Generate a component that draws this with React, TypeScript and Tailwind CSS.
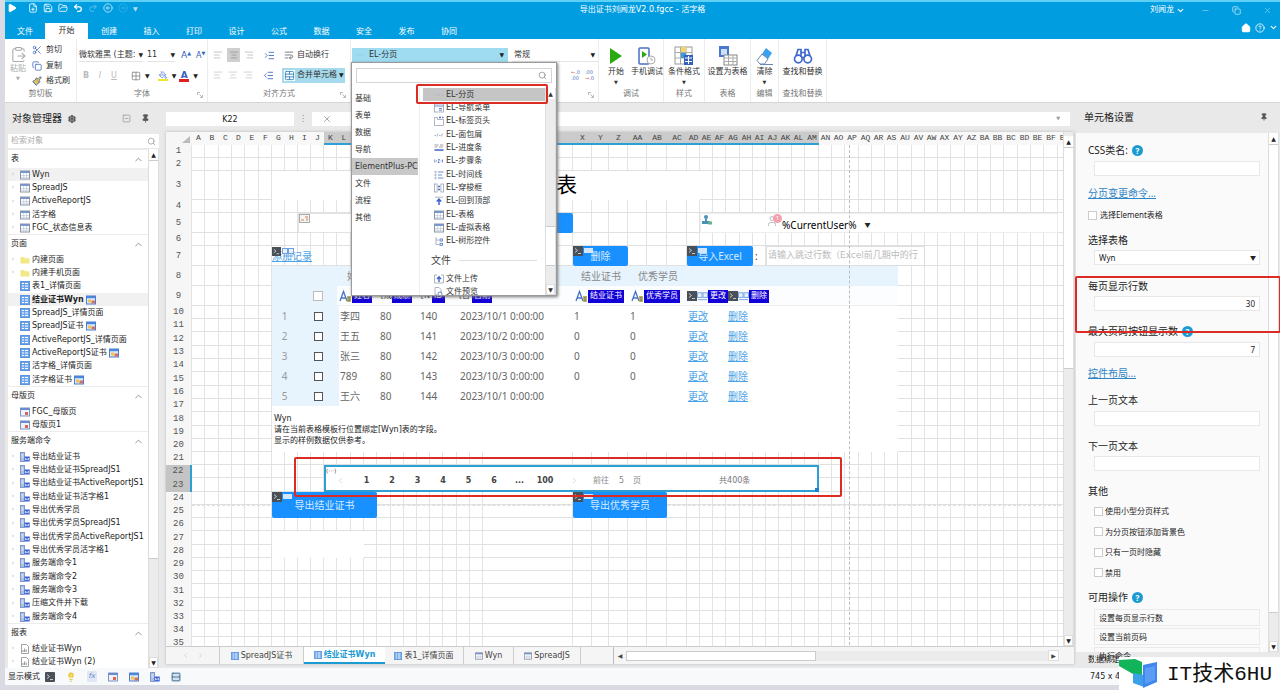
import React from 'react';
import {
  Play, FilePlus, Save, FolderOpen, Undo2, Redo2, CircleArrowLeft, CircleArrowRight, ChevronDown, ChevronUp,
  Minus, Copy, X, House, CircleHelp, Scissors, ClipboardPaste, Paintbrush, Grid2x2, PaintBucket,
  AlignLeft, AlignCenter, AlignRight, IndentIncrease, IndentDecrease, WrapText, TableCellsMerge, Search, Binoculars,
  Eraser, Settings, Pin, SquareMinus, ChevronLeft, ChevronRight, Lightbulb, Rows2, User,
} from 'lucide-react';

/* ---------- small drawings ---------- */

const TableIcon = ({ s = 10 }: { s?: number }) => (
  <svg width={s} height={s} viewBox="0 0 10 10" className="shrink-0">
    <rect x="0.5" y="1" width="9" height="8" fill="#fff" stroke="#8a95a8" />
    <rect x="0.5" y="1" width="9" height="2" fill="#7b96c8" />
    <path d="M1 5.5h8M1 7.3h8M3.7 3v6M6.5 3v6" stroke="#b9c2d2" strokeWidth="0.6" />
  </svg>
);
const PageIcon = ({ s = 10 }: { s?: number }) => (
  <svg width={s} height={s} viewBox="0 0 10 10" className="shrink-0">
    <rect x="0.5" y="0.5" width="9" height="9" fill="#6ca5ec" stroke="#5c93e0" />
    <path d="M2 2.5h2M5 2.5h3M2 5h2M5 5h3M2 7.5h2M5 7.5h3" stroke="#fff" strokeWidth="1.2" />
  </svg>
);
const FolderIcon = () => (
  <svg width="10" height="10" viewBox="0 0 10 10" className="shrink-0">
    <path d="M0.5 2h3.5l1 1.2h4.5v5.3h-9z" fill="#f3e887" />
  </svg>
);
const MasterIcon = () => (
  <svg width="10" height="10" viewBox="0 0 10 10" className="shrink-0">
    <rect x="0.5" y="1" width="9" height="8" fill="#eef2fa" stroke="#7d93c4" />
    <rect x="0.5" y="1" width="9" height="2" fill="#6a8ad2" />
    <rect x="5" y="5" width="3" height="3" fill="#e0644c" />
  </svg>
);
const CommandIcon = () => (
  <svg width="10" height="10" viewBox="0 0 10 10" className="shrink-0">
    <rect x="0.5" y="0.5" width="4" height="9" fill="#a9bfe6" stroke="#6b86be" strokeWidth="0.8" />
    <path d="M1.5 3h2M1.5 5h2" stroke="#fff" strokeWidth="0.8" />
    <rect x="4.5" y="4.5" width="5.2" height="5" fill="#3d63d6" />
    <path d="M5.5 8.2v-2l1.4 1.6 1.5-1.6v2" stroke="#fff" strokeWidth="0.7" fill="none" />
  </svg>
);
const ReportIcon = () => (
  <svg width="10" height="10" viewBox="0 0 10 10" className="shrink-0">
    <path d="M1.5 0.5h5l2 2v7h-7z" fill="#fff" stroke="#8b8b8b" strokeWidth="0.8" />
    <path d="M3 8V6M4.6 8V4.5M6.2 8V5.5" stroke="#777" strokeWidth="0.8" />
  </svg>
);
const BadgeIcon = () => (
  <svg width="10" height="10" viewBox="0 0 10 10" className="shrink-0">
    <rect x="0.5" y="1" width="9" height="8" fill="#dbe9fb" stroke="#4a7ed0" />
    <rect x="1" y="1" width="8" height="2.2" fill="#4a86dc" />
    <rect x="2" y="4.5" width="3" height="3" fill="#efc64a" />
    <rect x="5.5" y="5.5" width="3.5" height="3" fill="#d9705a" />
  </svg>
);
const ConsoleIcon = ({ s = 10 }: { s?: number }) => (
  <svg width={s} height={s} viewBox="0 0 10 10" className="shrink-0">
    <rect width="10" height="10" fill="#4a5058" />
    <path d="M2 2.5l2.5 2L2 6.5M5 7.5h3" stroke="#d5d9de" fill="none" strokeWidth="0.9" />
  </svg>
);
const MagicA = () => (
  <svg width="13" height="13" viewBox="0 0 13 13" className="shrink-0">
    <path d="M1 11L4.5 1.5 8 11M2.3 8h4.4" stroke="#4a72c8" fill="none" strokeWidth="1.3" />
    <rect x="8" y="6" width="4" height="6" fill="#b9b45e" />
    <path d="M9 7.5h2M9 9h2M9 10.5h2" stroke="#666" strokeWidth="0.6" />
  </svg>
);
const LinkBoxes = ({ s = 12 }: { s?: number }) => (
  <svg width={s} height="10" viewBox="0 0 12 10" className="shrink-0">
    <rect x="0.5" y="1.5" width="5" height="5" fill="#e8f1fd" stroke="#6f9fe0" />
    <rect x="6.5" y="1.5" width="5" height="5" fill="#e8f1fd" stroke="#6f9fe0" />
    <path d="M1 9h10" stroke="#6f9fe0" />
  </svg>
);
const Launcher = () => (
  <svg width="6" height="6" viewBox="0 0 6 6" className="absolute right-1 bottom-1">
    <path d="M0.5 3V0.5H3M2.5 2.5L5 5M5.5 3v2.5H3" stroke="#999" fill="none" strokeWidth="0.7" />
  </svg>
);
const Caret = () => <span className="text-[6px] leading-none text-[#222]">▼</span>;
const Help = () => (
  <span className="flex size-[11px] items-center justify-center rounded-full bg-[#1c9bd3] text-[8px] leading-none font-bold text-white">?</span>
);
const ElIcon = ({ kind }: { kind: string }) => {
  const p: Record<string, React.ReactNode> = {
    dots: <path d="M1.5 5h1M4.5 5h1M7.5 5h1" />,
    menu: <><rect x="0.5" y="1" width="9" height="8" /><path d="M0.5 3h9M5 5.5h3M5 7.2h3" stroke="#4a6fc4" /></>,
    tabs: <><path d="M0.5 3.5v6h9v-6M0.5 3.5v-2h3v2h6" /><path d="M5 1.5h2M8 1.5h1.5" stroke="#4a6fc4" strokeWidth="1.4" /></>,
    crumb: <path d="M0.5 5.5h1.6M3 6.5l1-3M5 5.5h1.6M7.5 6.5l1-3" />,
    progress: <><path d="M0.5 2h4M6 2h3.5M0.5 4h3M5 4h4" stroke="#888" /><path d="M0.5 7h9" stroke="#4a6fc4" strokeWidth="1.6" /></>,
    steps: <path d="M0.8 3.5v3M2 5h1M4 3.5h1.5L4 6.5h1.6M6.6 5h0.8M8.5 3.5v3" stroke="#4a6fc4" />,
    line: <><circle cx="1.5" cy="2" r="0.8" /><circle cx="1.5" cy="5" r="0.8" /><circle cx="1.5" cy="8" r="0.8" /><path d="M4 2h5.5M4 5h4M4 8h5.5" stroke="#4a6fc4" /></>,
    transfer: <><rect x="0.5" y="1" width="2.6" height="8" /><rect x="6.9" y="1" width="2.6" height="8" /><path d="M4 3.5h2M4 6.5h2" stroke="#4a6fc4" strokeWidth="1.3" /></>,
    top: <><path d="M1 1.2h8" /><path d="M5 9V3.5M2.8 5.5L5 3.2l2.2 2.3" stroke="#3c63d0" strokeWidth="1.5" /></>,
    tree: <><path d="M2 1v7.5h3M2 4h3" /><rect x="6" y="3" width="2.5" height="2" stroke="#4a6fc4" /><rect x="6" y="7.3" width="2.5" height="2" stroke="#4a6fc4" /></>,
    upload: <><path d="M3 1H0.5v8h9V1H7" /><path d="M5 8V3M3 5l2-2.2L7 5" stroke="#3c63d0" strokeWidth="1.4" /></>,
    view: <><path d="M1 0.5h4l2 2V6M1 0.5v7h2" /><circle cx="6" cy="7" r="2" stroke="#4a6fc4" /><path d="M7.5 8.5l2 1.2" stroke="#4a6fc4" /></>,
  };
  if (kind === 'table') return <TableIcon />;
  return <svg width="10" height="10" viewBox="0 0 10 10" fill="none" stroke="#9aa3b3" strokeWidth="0.8" className="shrink-0">{p[kind]}</svg>;
};

/* ---------- header ---------- */

const tabs = ['创建', '插入', '打印', '设计', '公式', '数据', '安全', '发布', '协同'];

function Header() {
  return (
    <header className="border-t-2 border-[#5fd0f5] bg-[#009de1] text-white">
      <div className="flex h-[18px] items-start justify-between pt-px">
        <div className="flex w-[480px] items-center gap-[5px] pl-[2px] [&_svg]:size-[10px]">
          <button aria-label="运行" className="mr-[6px]"><Play fill="white" /></button>
          <button aria-label="新建"><FilePlus /></button>
          <button aria-label="保存"><Save /></button>
          <button aria-label="打开"><FolderOpen /></button>
          <button aria-label="撤销"><Undo2 strokeWidth={3} /></button>
          <button aria-label="重做" className="opacity-40"><Redo2 /></button>
          <button aria-label="后退" className="opacity-80"><CircleArrowLeft /></button>
          <button aria-label="前进" className="opacity-20"><CircleArrowRight /></button>
          <span className="text-[6px] opacity-70">▼</span>
        </div>
        <h1 className="pt-px leading-[12px] whitespace-nowrap">导出证书刘闻龙V2.0.fgcc - 活字格</h1>
        <div className="flex w-[480px] items-center justify-end pt-px pr-2 leading-[12px]">
          <button className="flex items-center gap-[2px]">刘闻龙 <ChevronDown size={9} strokeWidth={3} /></button>
          <button aria-label="最小化" className="ml-4 opacity-50"><Minus size={9} /></button>
          <button aria-label="还原" className="ml-[22px] opacity-80"><Copy size={9} /></button>
          <button aria-label="关闭" className="ml-[22px] opacity-50"><X size={9} /></button>
        </div>
      </div>
      <nav className="flex h-[19px] items-center">
        <a href="#file" className="w-10 pt-1 text-center">文件</a>
        <a href="#home" className="flex h-4 w-[43px] items-center justify-center self-end bg-white text-[#333]">开始</a>
        {tabs.map((t) => <a key={t} href={'#' + t} className="w-[42px] pt-1 text-center even:w-[43px]">{t}</a>)}
        <span className="ml-auto flex items-center gap-1 pr-[2px] pb-1">
          <House size={10} fill="white" stroke="white" />
          <CircleHelp size={10} />
          <ChevronDown size={9} strokeWidth={3} />
        </span>
      </nav>
    </header>
  );
}

/* ---------- ribbon ---------- */

function Group({ label, className, launcher, children }: { label: string; className: string; launcher?: boolean; children: React.ReactNode }) {
  return (
    <section className={'relative flex h-full shrink-0 flex-col border-r border-[#ececec] ' + className}>
      <div className="flex h-[49px] items-stretch">{children}</div>
      <div className="text-center leading-[12px] text-[#777]">{label}</div>
      {launcher && <Launcher />}
    </section>
  );
}

function BigButton({ label, caret, className, children }: { label: string; caret?: boolean; className: string; children: React.ReactNode }) {
  return (
    <button className={'flex flex-col items-center pt-[7px] whitespace-nowrap ' + className}>
      <span className="flex h-5 items-center">{children}</span>
      <span className="leading-[11px]">{label}</span>
      {caret && <span className="mt-[2px] text-[5px] leading-[6px]">▼</span>}
    </button>
  );
}

const categories = ['基础', '表单', '数据', '导航', 'ElementPlus-PC', '文件', '流程', '其他'];
const cellTypes = [
  ['EL-分页', 'dots'], ['EL-导航菜单', 'menu'], ['EL-标签页头', 'tabs'], ['EL-面包屑', 'crumb'], ['EL-进度条', 'progress'],
  ['EL-步骤条', 'steps'], ['EL-时间线', 'line'], ['EL-穿梭框', 'transfer'], ['EL-回到顶部', 'top'], ['EL-表格', 'table'],
  ['EL-虚拟表格', 'table'], ['EL-树形控件', 'tree'],
];

function ScrollBar({ thumb, className = '' }: { thumb: string; className?: string }) {
  return (
    <div className={'flex w-[11px] shrink-0 flex-col border-x border-[#ddd] bg-[#ececec] ' + className}>
      <button aria-label="向上" className="flex h-[11px] items-center justify-center bg-white text-[6px] leading-none">▲</button>
      <div className="flex min-h-0 flex-1 flex-col"><div className={'border-y border-[#ccc] bg-white ' + thumb} /></div>
      <button aria-label="向下" className="flex h-[11px] items-center justify-center border border-[#ddd] bg-white text-[6px] leading-none">▼</button>
    </div>
  );
}

function CellTypeMenu() {
  return (
    <div className="absolute top-[14px] -left-px z-20 flex h-[234px] w-[206px] flex-col border border-[#9a9a9a] bg-white shadow-[1px_1px_3px_#777]">
      <label className="mx-1 mt-[5px] flex h-[15px] shrink-0 items-center border border-[#d5d5d5] px-1">
        <input aria-label="搜索单元格类型" className="min-w-0 flex-1 outline-none" />
        <Search size={9} className="text-[#888]" />
      </label>
      <div className="mt-[5px] flex min-h-0 flex-1">
        <ul className="w-[68px] shrink-0 border-r border-[#eee] pt-[2px]">
          {categories.map((c) => (
            <li key={c} className={'flex h-[17px] items-center pl-[3px] whitespace-nowrap ' + (c === 'ElementPlus-PC' ? 'w-[66px] bg-[#c8c8c8]' : '')}>{c}</li>
          ))}
        </ul>
        <div className="relative min-w-0 flex-1 pl-[3px]">
          <div className="h-full overflow-hidden">
            <ul className="[&>li:nth-child(3n)]:h-[14px]">
              {cellTypes.map(([name, kind], i) => (
                <li key={name} className={'flex h-[13px] items-center gap-[2px] pl-[11px] ' + (i === 0 ? 'bg-[#c5c5c5]' : '')}>
                  <ElIcon kind={kind} />{name}
                </li>
              ))}
            </ul>
            <div className="flex h-6 items-center gap-2 pl-2 text-[10px] text-[#444]">文件<hr className="mr-2 flex-1 border-[#ddd]" /></div>
            <ul>
              <li className="flex h-[13px] items-center gap-[2px] pl-[11px]"><ElIcon kind="upload" />文件上传</li>
              <li className="flex h-[13px] items-center gap-[2px] pl-[11px]"><ElIcon kind="view" />文件预览</li>
            </ul>
          </div>
          <div className="absolute -top-1 -right-[3px] -left-1 h-5 rounded-[2px] border-2 border-[#dc2b22]" />
        </div>
        <ScrollBar thumb="mt-auto mb-[18px] h-10" />
      </div>
    </div>
  );
}

function Ribbon() {
  return (
    <div className="flex h-[63px] shrink-0 bg-white text-[#333]">
      <Group label="剪切板" className="w-[72px]">
        <div className="flex w-[26px] flex-col items-center pt-[7px] text-[#aaa]">
          <ClipboardPaste size={17} strokeWidth={1.5} /><span className="leading-[12px]">粘贴</span><span className="text-[5px]">▼</span>
        </div>
        <div className="flex flex-col justify-between pt-[4px] pl-px [&>button]:flex [&>button]:h-[14px] [&>button]:items-center [&>button]:gap-[4px]">
          <button><Scissors size={10} className="text-[#4a6fc4]" />剪切</button>
          <button><Copy size={10} className="text-[#4a6fc4]" />复制</button>
          <button><Paintbrush size={10} className="text-[#3a62c0]" fill="#e9c34a" />格式刷</button>
        </div>
      </Group>
      <Group label="字体" className="w-[131px]" launcher>
        <div className="flex flex-1 flex-col pt-[9px] pl-[2px]">
          <div className="flex h-[15px] items-center">
            <button className="flex w-[64px] items-center justify-between overflow-hidden border-b border-[#e5e5e5] whitespace-nowrap"><span className="w-[58px] overflow-hidden text-left">微软雅黑 (主题:</span><Caret /></button>
            <button className="ml-1 flex w-[28px] items-center justify-between border-b border-[#e5e5e5]">11<Caret /></button>
            <button className="ml-[6px] text-[9px] text-[#3562b8]">A<sup className="text-[5px]">▲</sup></button>
            <button className="ml-[5px] text-[8px] text-[#3562b8]">A<sup className="text-[5px]">▼</sup></button>
          </div>
          <div className="mt-[6px] flex h-[14px] items-center">
            <button className="ml-[2px] w-[10px] font-bold text-[#bbb]">B</button>
            <button className="ml-1 w-[10px] text-[#bbb] italic">I</button>
            <button className="ml-1 w-[10px] text-[#bbb] underline">U</button>
            <button className="ml-3 flex items-center gap-1"><Grid2x2 size={10} className="text-[#888]" /><Caret /></button>
            <button className="ml-2 flex items-center gap-1"><PaintBucket size={10} className="border-b-2 border-[#f1e52c] text-[#4a6fc4]" /><Caret /></button>
            <button className="ml-[3px] flex items-center gap-1"><span className="w-[10px] border-b-[3px] border-[#e02020] text-[9px] leading-[8px] font-bold text-[#3562b8]">A</span><Caret /></button>
          </div>
        </div>
      </Group>
      <Group label="对齐方式" className="w-[143px]" launcher>
        <div className="flex flex-col gap-[6px] pt-[9px] pl-[5px]">
          <div className="flex h-[14px] items-center text-[#bbb]">
            <AlignLeft size={10} /><span className="mx-1 flex h-[14px] w-[13px] items-center justify-center bg-[#cfcfcf] text-[#999]"><AlignCenter size={10} /></span><AlignRight size={10} />
            <IndentIncrease size={11} className="ml-[10px] text-[#4a6fc4]" />
            <button className="ml-[9px] flex items-center gap-[3px] text-[#333]"><WrapText size={10} className="text-[#667]" />自动换行</button>
          </div>
          <div className="flex h-[14px] items-center text-[#ccc]">
            <AlignLeft size={10} /><AlignCenter size={10} className="mx-[5px]" /><AlignRight size={10} />
            <IndentDecrease size={11} className="ml-[10px] text-[#4a6fc4]" />
            <button className="ml-2 flex h-[15px] w-[63px] items-center gap-[2px] bg-[#a5dbec] pl-[2px] whitespace-nowrap text-[#333]"><TableCellsMerge size={11} className="shrink-0 bg-white text-[#3a86b8]" />合并单元格<Caret /></button>
          </div>
        </div>
      </Group>
      <Group label="" className="w-[248px]" launcher>
        <div className="flex pt-[9px] pl-px">
          <div className="relative h-[14px] w-[156px]">
            <button className="flex h-[14px] w-full items-center gap-1 bg-[#9fdcf2] pr-1 pl-[3px] text-left" aria-expanded="true"><ElIcon kind="dots" /><span className="flex-1">EL-分页</span><Caret /></button>
            <CellTypeMenu />
          </div>
          <div className="ml-1 w-[86px]">
            <button className="flex h-[14px] w-full items-center justify-between border-b border-[#e5e5e5] pr-[3px] pl-[2px]">常规<Caret /></button>
            <div className="mt-[7px] flex justify-end gap-[5px] pr-1 text-[5px] leading-[6px] text-[#4a6fc4]">
              <span><span className="text-[#d9704a]">←</span>.0<br />.00</span>
              <span>.00<br /><span className="text-[#d9704a]">→</span>.0</span>
            </div>
          </div>
        </div>
      </Group>
      <Group label="调试" className="w-[65px]">
        <BigButton label="开始" caret className="w-[34px]"><svg width="14" height="18" viewBox="0 0 14 18"><path d="M1 1l12 8L1 17z" fill="#2aa910" /></svg></BigButton>
        <BigButton label="手机调试" className="w-[28px]">
          <svg width="20" height="20" viewBox="0 0 20 20" fill="none"><rect x="2" y="2" width="10" height="16" rx="1" stroke="#4a6fc4" strokeWidth="1.5" /><path d="M5 5l5 3.5L5 12z" fill="#2aa910" /><circle cx="14" cy="14" r="4" fill="#fff" stroke="#aaa" /><path d="M14 11.5V14h2" stroke="#aaa" /></svg>
        </BigButton>
      </Group>
      <Group label="样式" className="w-[41px]">
        <BigButton label="条件格式" caret className="w-full">
          <svg width="20" height="20" viewBox="0 0 20 20"><rect x="1" y="1" width="17" height="17" fill="#fff" stroke="#999" /><path d="M1 6.5h17M1 12h17M6.5 1v17M12 1v17" stroke="#aaa" /><rect x="7" y="1" width="5" height="5" fill="#efd76a" /><rect x="7" y="7" width="5" height="5" fill="#3a9bd8" /><rect x="10" y="9" width="9" height="10" fill="#3562c0" /><path d="M11 12h7M11 15.5h7M14.5 10v8" stroke="#fff" /></svg>
        </BigButton>
      </Group>
      <Group label="表格" className="w-[46px]">
        <BigButton label="设置为表格" className="w-full">
          <svg width="20" height="20" viewBox="0 0 20 20"><rect x="1" y="0" width="10" height="11" fill="#4a78d0" /><rect x="3" y="3" width="6" height="6" fill="#cfe0fa" /><rect x="6" y="9" width="13" height="10" fill="#fff" stroke="#888" /><path d="M6 12h13M6 15.5h13M10.5 9v10M15 9v10" stroke="#aaa" /></svg>
        </BigButton>
      </Group>
      <Group label="编辑" className="w-[28px]">
        <BigButton label="清除" caret className="w-full">
          <svg width="20" height="20" viewBox="0 0 20 20"><path d="M11 2l6 5-4 6-6-5z" fill="#3ba0ee" /><path d="M7 8l6 5-3.5 5H5l-3-3.5z" fill="#fff" stroke="#6c86b4" /><path d="M5 18.5h13" stroke="#6c86b4" /></svg>
        </BigButton>
      </Group>
      <Group label="查找和替换" className="w-[48px]">
        <BigButton label="查找和替换" className="w-full">
          <svg width="20" height="18" viewBox="0 0 20 18" fill="none" stroke="#3f68d0" strokeWidth="1.7"><circle cx="5.3" cy="12" r="3.8" /><circle cx="14.7" cy="12" r="3.8" /><path d="M9 11q1-1 2 0M3 9L5 2.5h3V10M17 9l-2-6.5h-3V10M8 5.5h4" /></svg>
        </BigButton>
      </Group>
    </div>
  );
}

/* ---------- object tree ---------- */

type Item = { t: string; badge?: boolean; on?: boolean; icon?: React.ReactNode; arrow?: boolean };
const sections: { title: string; icon: React.ReactNode; arrow: boolean; items: Item[] }[] = [
  { title: '表', icon: <TableIcon />, arrow: true, items: [{ t: 'Wyn', on: true }, { t: 'SpreadJS' }, { t: 'ActiveReportJS' }, { t: '活字格' }, { t: 'FGC_状态信息表' }] },
  {
    title: '页面', icon: <PageIcon />, arrow: false, items: [
      { t: '内建页面', icon: <FolderIcon />, arrow: true }, { t: '内建手机页面', icon: <FolderIcon />, arrow: true }, { t: '表1_详情页面' },
      { t: '结业证书Wyn', badge: true, on: true }, { t: 'SpreadJS_详情页面' }, { t: 'SpreadJS证书', badge: true },
      { t: 'ActiveReportJS_详情页面' }, { t: 'ActiveReportJS证书', badge: true }, { t: '活字格_详情页面' }, { t: '活字格证书', badge: true }],
  },
  { title: '母版页', icon: <MasterIcon />, arrow: false, items: [{ t: 'FGC_母版页' }, { t: '母版页1' }] },
  {
    title: '服务端命令', icon: <CommandIcon />, arrow: true, items: [
      '导出结业证书', '导出结业证书SpreadJS1', '导出结业证书ActiveReportJS1', '导出结业证书活字格1', '导出优秀学员', '导出优秀学员SpreadJS1',
      '导出优秀学员ActiveReportJS1', '导出优秀学员活字格1', '服务端命令1', '服务端命令2', '服务端命令3', '压缩文件并下载', '服务端命令4'].map((t) => ({ t })),
  },
  { title: '报表', icon: <ReportIcon />, arrow: true, items: [{ t: '结业证书Wyn' }, { t: '结业证书Wyn (2)' }] },
];

function Sidebar() {
  return (
    <aside className="flex w-[156px] shrink-0 flex-col pr-[2px] pl-[3px]">
      <div className="flex h-[31px] shrink-0 items-center pl-1 text-[10px]">
        对象管理器<Settings size={8} strokeWidth={4} className="ml-[6px] text-[#555]" />
        <SquareMinus size={9} className="ml-auto text-[#999]" /><Pin size={9} fill="#555" className="mr-[9px] ml-[10px] text-[#555]" />
      </div>
      <label className="flex h-[14px] shrink-0 items-center bg-white px-[3px]">
        <input placeholder="检索对象" aria-label="检索对象" className="min-w-0 flex-1 outline-none placeholder:text-[#aaa]" /><Search size={9} className="text-[#999]" />
      </label>
      <div className="mt-px flex min-h-0 flex-1 bg-white">
        <div className="min-w-0 flex-1 overflow-hidden">
          {sections.map((s) => (
            <section key={s.title}>
              <h2 className="flex h-[19px] items-center justify-between border-t border-[#ececec] pr-1 pl-[3px]">{s.title}<ChevronUp size={11} strokeWidth={1.5} className="text-[#666]" /></h2>
              <ul className="[&>li:nth-child(3n)]:h-[14px]">
                {s.items.map((i) => (
                  <li key={i.t} className={'flex h-[13px] items-center gap-[2px] whitespace-nowrap ' + (i.on ? 'bg-[#f1f1f1] ' : '') + (i.on && i.badge ? 'font-bold' : '')}>
                    <span className="w-[10px] shrink-0 text-center text-[7px] text-[#bbb]">{(s.arrow || i.arrow) && '›'}</span>
                    {i.icon ?? s.icon}
                    {i.t}
                    {i.badge && <BadgeIcon />}
                  </li>
                ))}
              </ul>
            </section>
          ))}
        </div>
        <ScrollBar thumb="h-[399px]" />
      </div>
    </aside>
  );
}

/* ---------- sheet ---------- */

const columns: [string, number][] = [
  ['A', 13], ['B', 14], ['C', 13], ['D', 13], ['E', 14], ['F', 13], ['G', 13], ['H', 13], ['I', 13], ['J', 13], ['K', 13], ['L', 14],
  ['M', 13], ['N', 13], ['O', 14], ['P', 13], ['Q', 13], ['R', 13], ['S', 13], ['T', 14], ['U', 13], ['V', 13], ['W', 90], ['X', 19],
  ['Y', 17], ['Z', 19], ['AA', 19], ['AB', 20], ['AC', 20], ['AD', 13], ['AE', 13], ['AF', 13], ['AG', 14], ['AH', 13], ['AI', 13],
  ['AJ', 13], ['AK', 13], ['AL', 13], ['AM', 14], ['AN', 13], ['AO', 13], ['AP', 14], ['AQ', 13], ['AR', 13], ['AS', 13], ['AU', 14],
  ['AV', 13], ['AW', 13], ['AX', 13], ['AY', 14], ['AZ', 13], ['BA', 13], ['BB', 13], ['BC', 14], ['BD', 13], ['BE', 13], ['BF', 14], ['BG', 13],
];
const rowHeights = [13, 13, 29, 13, 20, 13, 20, 20, 20, 13, 13, 14, 13, 13, 14, 13, 13, 14, 13, 13, 13, 13, 14, 13, 13, 13, 14, 13, 13, 13, 14, 13, 13, 13, 13];
const names = columns.map((c) => c[0]);
const sheetTemplate = {
  gridTemplateColumns: '26px ' + columns.map((c) => c[1] + 'px').join(' '),
  gridTemplateRows: '13px ' + rowHeights.map((h) => h + 'px').join(' '),
};

/** Grid placement of a cell range such as "G24:N25". */
function at(range: string): React.CSSProperties {
  const [a, b = a] = range.split(':');
  const parse = (r: string) => {
    const m = /^([A-Z]+)(\d+)$/.exec(r)!;
    return { c: names.indexOf(m[1]) + 2, r: Number(m[2]) + 1 };
  };
  const from = parse(a);
  const to = parse(b);
  return { gridColumn: `${from.c} / ${to.c + 1}`, gridRow: `${from.r} / ${to.r + 1}` };
}

function SheetButton({ range, children }: { range: string; children: React.ReactNode }) {
  return (
    <button style={at(range)} className="relative rounded-[2px] bg-[#1890ff] text-center text-[10px] whitespace-nowrap text-[#d9ecff]">
      <span className="absolute top-0 left-0 flex"><ConsoleIcon /><span className="mt-[2px] ml-px h-[5px] w-[9px] bg-[#d4e6fb]" /></span>
      {children}
    </button>
  );
}

const Tag = ({ children }: { children: React.ReactNode }) => <span className="flex h-[13px] items-center bg-[#1200d8] px-[2px] whitespace-nowrap text-white">{children}</span>;

const records = [
  ['李四', '80', '140', '2023/10/1 0:00:00', '1', '1'],
  ['王五', '80', '141', '2023/10/2 0:00:00', '0', '0'],
  ['张三', '80', '142', '2023/10/3 0:00:00', '0', '0'],
  ['789', '80', '143', '2023/10/3 0:00:00', '0', '0'],
  ['王六', '80', '144', '2023/10/1 0:00:00', '', ''],
];

function Records() {
  return (
    <div style={at('G10:AS20')} className="bg-white">
      <table className="w-full table-fixed border-collapse text-left text-[10px] text-[#666]">
        <colgroup>
          <col className="w-[25px]" /><col className="w-[42px]" /><col className="w-10" /><col className="w-10" /><col className="w-10" />
          <col className="w-[114px]" /><col className="w-14" /><col className="w-[58px]" /><col className="w-10" /><col />
        </colgroup>
        <tbody>
          {records.map((r, i) => (
            <tr key={i} className="h-5 leading-[20px]">
              <td className="bg-[#e8f4fd] p-0 text-center text-[#999]">{i + 1}</td>
              <td className="bg-[#e8f4fd] p-0"><input type="checkbox" aria-label={r[0]} className="ml-[17px] block size-[9px] appearance-none border border-[#555] bg-white" /></td>
              {r.map((v, k) => <td key={k} className="p-0 pl-px whitespace-nowrap">{v}</td>)}
              <td className="p-0 pl-px text-[#4aa3e8] underline"><a href="#edit">更改</a></td>
              <td className="p-0 pl-px text-[#4aa3e8] underline"><a href="#delete">删除</a></td>
            </tr>
          ))}
        </tbody>
      </table>
      <p className="pt-[7px] pl-[2px] leading-[11px] text-[#222]">Wyn<br />请在当前表格模板行位置绑定[Wyn]表的字段。<br />显示的样例数据仅供参考。</p>
    </div>
  );
}

function Pager() {
  return (
    <nav style={at('K22:AM23')} className="relative border-2 border-[#2c9fd4] bg-white">
      <span className="absolute top-0 left-0 text-[6px] leading-[8px] text-[#555]">(···)</span>
      <div className="flex h-full items-center pt-1 text-[#444]">
        <button aria-label="上一页" className="flex w-[28px] justify-center text-[#ccc]"><ChevronLeft size={9} /></button>
        {['1', '2', '3', '4', '5', '6', '...', '100'].map((n) => <button key={n} className="w-[25px] font-bold odd:w-[26px]">{n}</button>)}
        <button aria-label="下一页" className="ml-1 flex w-[25px] justify-center text-[#ccc]"><ChevronRight size={9} /></button>
        <span className="ml-[6px] text-[#888]">前往</span><span className="ml-[10px] text-[#888]">5</span><span className="ml-[9px] text-[#888]">页</span>
        <span className="ml-[78px] text-[#777]">共400条</span>
      </div>
      <span className="absolute -right-[2px] -bottom-[2px] size-[4px] bg-[#1f7fd0]" />
      <div className="absolute -top-[10px] -right-[25px] -bottom-[7px] -left-[32px] z-10 rounded-[2px] border-2 border-[#dc2b22]" />
    </nav>
  );
}

function Sheet() {
  return (
    <div className="min-w-0 flex-1 overflow-hidden bg-white">
      <div className="grid" style={sheetTemplate}>
        <div style={{ gridColumn: 1, gridRow: 1 }} className="flex items-end justify-end bg-[#f6f6f6] pr-[2px] pb-[2px]"><svg width="8" height="7" viewBox="0 0 8 7"><path d="M8 0v7H0z" fill="#bbb" /></svg></div>
        {columns.map(([n], i) => {
          const active = i >= 10 && i <= 38;
          return (
            <React.Fragment key={n}>
              <div style={{ gridColumn: i + 2, gridRow: 1 }} className={'overflow-hidden text-center font-[Liberation_Mono,monospace] text-[8px] leading-[12px] text-[#444] ' + (active ? 'border-b-2 border-[#2c9fd4] bg-[#cbcbcb]' : 'bg-[#f8f8f8]')}>{n}</div>
              <div style={{ gridColumn: i + 2, gridRow: '2 / -1' }} className="border-r border-[#e3e3e3]" />
            </React.Fragment>
          );
        })}
        {rowHeights.map((_, i) => {
          const active = i === 21 || i === 22;
          return (
            <React.Fragment key={i}>
              <div style={{ gridColumn: 1, gridRow: i + 2 }} className={'flex items-center justify-center font-[Liberation_Mono,monospace] text-[9px] leading-none text-[#555] ' + (active ? 'border-r-2 border-[#2c9fd4] bg-[#c4c4c4]' : 'border-r border-[#e3e3e3] bg-[#f6f6f6]')}>{i + 1}</div>
              <div style={{ gridColumn: '2 / -1', gridRow: i + 2 }} className="border-b border-[#e0e0e0]" />
            </React.Fragment>
          );
        })}

        <div style={at('G3:AD3')} className="bg-white" />
        <div style={at('W3:X3')} className="flex items-center justify-end pr-[15px] text-[21px] leading-none text-black">表</div>

        <div style={at('I5:V5')} className="border border-[#e3e3e3] bg-white"><svg width="11" height="9" viewBox="0 0 11 9"><rect x="0.5" y="0.5" width="10" height="8" fill="#f4f4f4" stroke="#aaa" /><path d="M2 6h3M6 3h1M8 2v5" stroke="#d9805a" /></svg></div>
        <div style={at('W5')} className="rounded-[2px] bg-[#1890ff]" />
        <div style={at('AE5:BF5')} className="border border-[#eee] bg-white">
          <svg width="12" height="12" viewBox="0 0 12 12"><circle cx="5" cy="3" r="2" fill="#4a90b8" /><path d="M4 5h2v2h3v3H1V7h3z" fill="#4a90b8" /><rect x="7" y="7.5" width="4" height="3" fill="#5fb58a" /></svg>
        </div>
        <div style={at('AJ5:AS5')} className="flex items-center text-[10px] text-black">
          <span className="relative flex w-4 shrink-0 self-start"><User size={12} className="mt-[2px] text-[#bbb]" /><span className="absolute top-px right-0 size-[9px] rounded-full bg-[#f3a0ae] text-center text-[6px] leading-[9px] text-white">1</span></span>
          <span className="pt-1">%CurrentUser%</span><span className="ml-2"><Caret /></span>
        </div>

        <div style={at('G7:J7')} className="relative text-[10px] leading-[20px] whitespace-nowrap text-[#4aa3e8]">
          <a href="#add" className="underline">添加记录</a>
          <span className="absolute top-px left-0 flex gap-px"><ConsoleIcon s={9} /><LinkBoxes /></span>
        </div>
        <SheetButton range="X7:Z7">删除</SheetButton>
        <SheetButton range="AD7:AH7">导入Excel</SheetButton>
        <div style={at('AI7')} className="pl-[2px] text-[10px] leading-[20px] text-[#333]">:</div>
        <input style={at('AJ7:AV7')} aria-label="跳过行数" placeholder="请输入跳过行数（Excel前几期中的行" className="w-full min-w-0 border border-[#ddd] bg-white/80 pl-px text-[9px] outline-none placeholder:text-[#bbb]" />

        <div style={at('G8:AS8')} className="bg-[#e8f4fd]" />
        <div style={at('K9:AS9')} className="border-b border-[#eee] bg-[#fbfdff]" />
        <div style={at('G9:K9')} className="flex items-center bg-[#e8f4fd] pl-[41px]"><input type="checkbox" aria-label="全选" className="size-[10px] appearance-none border border-[#bbb] bg-white" /></div>
        <div style={at('L8')} className="pl-[10px] text-[10px] leading-[20px] text-[#888]">姓</div>
        <div style={at('X8:Z8')} className="pl-2 text-[10px] leading-[20px] whitespace-nowrap text-[#888]">结业证书</div>
        <div style={at('AA8:AC8')} className="pl-[10px] text-[10px] leading-[20px] whitespace-nowrap text-[#888]">优秀学员</div>
        <div style={at('L9:W9')} className="flex items-center pl-[2px]">
          <span className="flex w-10 items-center"><MagicA /><Tag>姓名</Tag></span>
          <span className="flex w-10 items-center"><span className="w-[13px]">{'{成'}</span><Tag>成绩</Tag></span>
          <span className="flex w-10 items-center"><span className="w-[13px]">{'{N'}</span><Tag>ID</Tag></span>
          <span className="flex items-center"><span className="w-[13px]">[日</span><Tag>日期</Tag></span>
        </div>
        <div style={at('X9:Z9')} className="flex items-center pl-[2px]"><MagicA /><Tag>结业证书</Tag></div>
        <div style={at('AA9:AC9')} className="flex items-center pl-[3px]"><MagicA /><Tag>优秀学员</Tag></div>
        <div style={at('AD9:AI9')} className="flex items-center"><ConsoleIcon /><LinkBoxes s={11} /><Tag>更改</Tag><span className="w-px" /><ConsoleIcon /><LinkBoxes s={11} /><Tag>删除</Tag></div>

        <Records />
        <div style={at('A25:BG25')} className="border-t border-dashed border-[#ddd]" />
        <SheetButton range="G24:N25">导出结业证书</SheetButton>
        <SheetButton range="X24:AB25">导出优秀学员</SheetButton>
        <Pager />
        <div style={at('G27:M28')} className="bg-white" />
        <div style={at('AP1:AP35')} className="ml-1 border-l border-dashed border-[#bbb]" />
      </div>
    </div>
  );
}

const sheetTabs: [string, React.ReactNode, string][] = [
  ['SpreadJS证书', <PageIcon s={8} />, 'w-[84px]'], ['结业证书Wyn', <PageIcon s={8} />, 'w-[81px]'], ['表1_详情页面', <PageIcon s={8} />, 'w-[79px]'],
  ['Wyn', <TableIcon s={8} />, 'w-[50px]'], ['SpreadJS', <TableIcon s={8} />, 'w-[67px]'],
];

function Workbook() {
  return (
    <main className="flex min-w-0 flex-1 flex-col pt-[9px] pb-1 pl-[5px]">
      <div className="flex h-[14px] shrink-0 items-center">
        <input aria-label="名称框" defaultValue="K22" className="h-full w-[128px] bg-white text-center outline-none" />
        <span className="w-[18px] text-center text-[#888]">⋮</span>
        <div className="mr-[6px] flex h-full flex-1 items-center bg-white px-[10px] text-[#999]"><X size={10} /><input aria-label="编辑栏" className="ml-4 h-full min-w-0 flex-1 outline-none" /><span className="text-[5px]">▼</span></div>
      </div>
      <div className="mt-[6px] mr-[2px] flex min-h-0 flex-1 flex-col shadow-[0_0_3px_#bbb]">
        <div className="flex min-h-0 flex-1"><Sheet /><ScrollBar thumb="h-[222px]" className="pt-1" /></div>
        <div className="flex h-[18px] shrink-0 items-stretch border-t border-[#ccc] bg-[#f5f5f5] text-[#444]">
          <span className="flex w-[54px] items-center justify-center gap-2 border-r border-[#ccc] text-[#bbb]"><ChevronLeft size={7} /><ChevronRight size={7} /></span>
          {sheetTabs.map(([t, icon, w], i) => (
            <button key={t} className={'flex items-center justify-center gap-[2px] whitespace-nowrap ' + w + (i === 1 ? ' border-b-2 border-[#1c9bd3] bg-white font-bold text-[#1c9bd3]' : ' border-r border-[#ccc]')}>{icon}{t}</button>
          ))}
          <div className="ml-8 flex flex-1 items-center border-l border-[#bbb] py-[3px] pr-[15px]">
            <button aria-label="向左" className="w-3 text-[6px]">◀</button>
            <div className="h-[10px] flex-1 bg-[#ececec]"><div className="h-full w-[45%] border border-[#ccc] bg-white" /></div>
            <button aria-label="向右" className="h-[11px] w-[11px] border border-[#ddd] bg-white text-[6px] leading-none">▶</button>
          </div>
        </div>
      </div>
    </main>
  );
}

/* ---------- property panel ---------- */

const field = 'ml-[6px] block h-[15px] w-[166px] border border-[#e8e8e8] bg-white px-1 outline-none';
const box = 'size-[9px] appearance-none border border-[#ccc] bg-white';

function Properties() {
  return (
    <aside className="flex w-[204px] shrink-0 flex-col">
      <h2 className="flex h-[30px] shrink-0 items-center justify-between pr-3 pb-[2px] pl-2 text-[10px]">单元格设置<Pin size={8} fill="#555" className="text-[#555]" /></h2>
      <div className="flex min-h-0 flex-1 pr-px">
        <div className="relative z-10 min-w-0 flex-1 bg-[#fafafa]">
          <form className="h-full overflow-x-visible overflow-y-clip pl-[12px] [&_.t]:flex [&_.t]:h-[15px] [&_.t]:items-center [&_.t]:gap-1 [&_.t]:text-[10px]">
            <label htmlFor="css" className="t mt-[10px]">CSS类名:<Help /></label>
            <input id="css" className={field + ' mt-[3px]'} />
            <a href="#command" className="t mt-[10px] text-[#2f84c6] underline">分页变更命令...</a>
            <label className="mt-[8px] flex h-[12px] items-center gap-[3px]"><input type="checkbox" className={box} />选择Element表格</label>
            <label htmlFor="table" className="t mt-[12px]">选择表格</label>
            <div className="flex items-center">
              <select id="table" className={field + ' mt-[2px] appearance-none'}><option>Wyn</option></select>
              <span className="pointer-events-none -ml-[10px]"><Caret /></span>
            </div>
            <div className="relative mt-[14px]">
              <label htmlFor="rows" className="t">每页显示行数</label>
              <input id="rows" defaultValue="30" className={field + ' mt-[2px] text-right'} />
              <div className="absolute -top-[3px] -right-[13px] -left-[13px] z-10 h-[57px] rounded-[2px] border-2 border-[#dc2b22]" />
            </div>
            <label htmlFor="max" className="t mt-[13px]">最大页码按钮显示数<Help /></label>
            <input id="max" defaultValue="7" className={field + ' mt-[3px] text-right'} />
            <a href="#layout" className="t mt-[9px] text-[#2f84c6] underline">控件布局...</a>
            <label htmlFor="prev" className="t mt-[12px]">上一页文本</label>
            <input id="prev" className={field + ' mt-[3px]'} />
            <label htmlFor="next" className="t mt-[13px]">下一页文本</label>
            <input id="next" className={field + ' mt-[2px]'} />
            <h3 className="t mt-[13px]">其他</h3>
            <div className="mt-[2px] ml-[6px]">
              {['使用小型分页样式', '为分页按钮添加背景色', '只有一页时隐藏', '禁用'].map((t) => (
                <label key={t} className="flex h-[20px] items-center gap-[2px] even:h-[21px]"><input type="checkbox" className={box} />{t}</label>
              ))}
            </div>
            <h3 className="t mt-[7px]">可用操作<Help /></h3>
            <ul className="mt-1 ml-[6px] w-[166px]">
              {['设置每页显示行数', '设置当前页码', '执行命令'].map((t) => <li key={t} className="mb-[2px] flex h-[17px] items-center border border-[#eaeaea] pl-1">{t}</li>)}
            </ul>
          </form>
        </div>
        <ScrollBar thumb="h-[469px]" />
      </div>
      <div className="h-[16px] shrink-0 pl-[12px] leading-[16px] whitespace-nowrap">数据绑定</div>
    </aside>
  );
}

export default function App() {
  return (
    <div className="relative flex h-screen min-h-[500px] w-full flex-col overflow-hidden bg-[#d9dae2] pb-[5px] pl-[5px] font-['DejaVu_Sans','Noto_Sans_CJK_SC',sans-serif] text-[8px] text-[#222] [&_[class*='text-[10px]']]:font-['Noto_Sans','Noto_Sans_CJK_SC',sans-serif]">
      <Header />
      <Ribbon />
      <div className="flex min-h-0 flex-1 border-t border-[#d5d5d5] bg-[#e9e9e9]">
        <Sidebar />
        <Workbook />
        <Properties />
      </div>
      <footer className="flex h-[17px] shrink-0 items-center bg-[#f8f9fb] pl-[3px]">
        显示模式
        <span className="ml-[5px] flex flex-1 items-center gap-[11px] [&>*]:rounded-[1px]">
          <ConsoleIcon />
          <Lightbulb size={10} fill="#f2d75a" stroke="#e0c040" />
          <i className="w-[10px] bg-[#e0e8f6] text-center text-[7px] text-[#6a86c0]">fx</i>
          <MasterIcon />
          <BadgeIcon />
          <CommandIcon />
          <Rows2 size={10} className="bg-[#cfe3f3] text-[#47627c]" />
        </span>
        <span className="w-[190px]">745 x 40</span>
      </footer>
      <div className="absolute right-0 bottom-0 z-30 flex h-[33px] w-[161px] items-center bg-white pt-px">
        <svg width="40" height="30" viewBox="0 0 40 30" className="shrink-0">
          <path d="M0 1L16 0l7 3v14l-9-2L0 7z" fill="#12b45a" />
          <path d="M14 14l11 2v12l-11-4z" fill="#3aa0e8" />
          <path d="M24 6l14-3v20l-14 6z" fill="#3f86ee" />
          <path d="M26 9l10-2v14l-10 4z" fill="#5b9cf5" />
        </svg>
        <span className="ml-2 font-['Liberation_Mono','Noto_Sans_CJK_SC',monospace] text-[21px] leading-none whitespace-nowrap text-[#111]">IT技术6HU</span>
      </div>
    </div>
  );
}
